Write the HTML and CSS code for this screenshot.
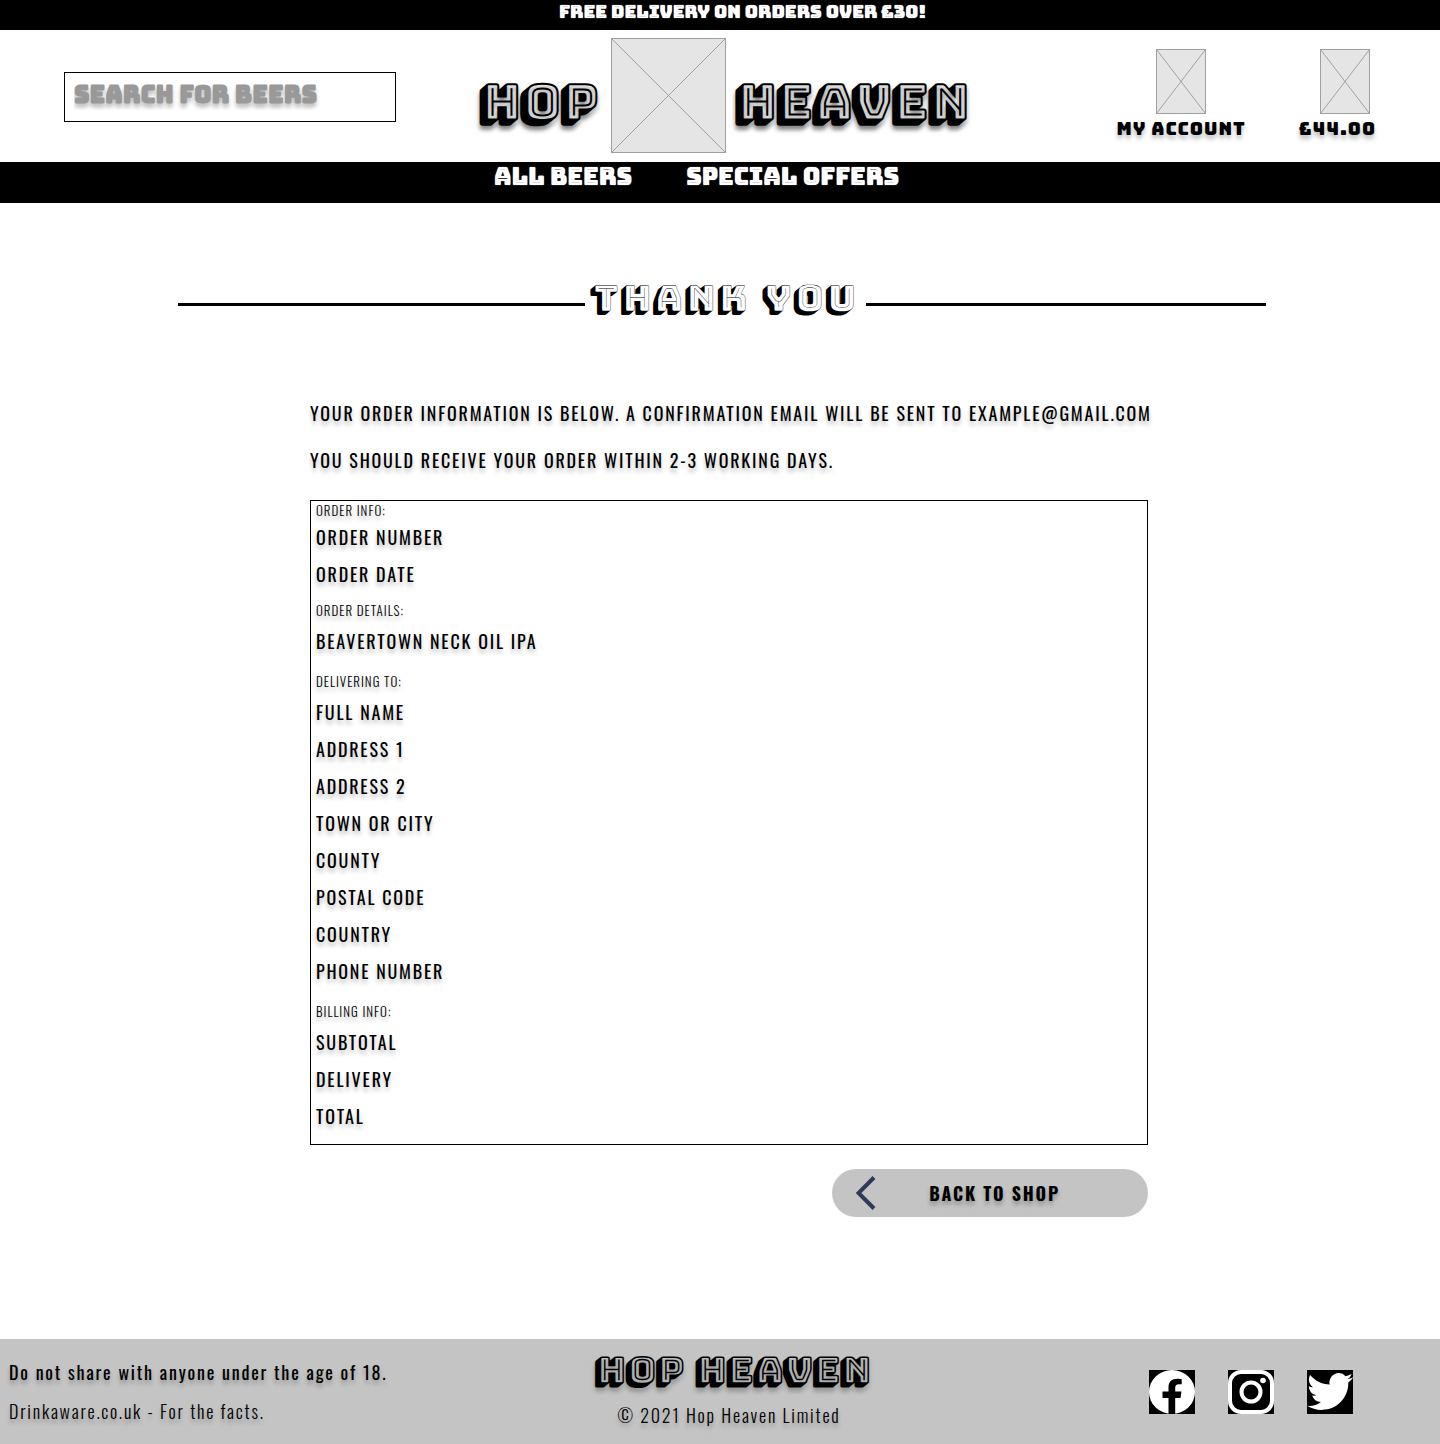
FILE: index.html
```html
<!DOCTYPE html>
<html lang="en">
<head>
<meta charset="utf-8">
<meta name="viewport" content="width=device-width, initial-scale=1">
<title>Hop Heaven - Thank you</title>
<link rel="stylesheet" href="styles.css">
</head>
<body>
<p class="promo">FREE DELIVERY ON ORDERS OVER £30!</p>
<header class="header">
  <form class="search" role="search">
    <input class="search-input" type="search" aria-label="Search for beers" placeholder="SEARCH FOR BEERS">
  </form>
  <a class="brand" href="#">
    <span class="brand-left shade">HOP</span>
    <svg class="brand-image" viewBox="0 0 115 115" aria-hidden="true"><rect x=".5" y=".5" width="114" height="114"/><path d="M.5.5l114 114M114.5.5L.5 114.5"/></svg>
    <span class="shade">HEAVEN</span>
  </a>
  <div class="actions">
    <a class="action account" href="#">
      <svg class="thumb" viewBox="0 0 50 65" aria-hidden="true"><rect x=".5" y=".5" width="49" height="64"/><path d="M.5.5l49 64M49.5.5L.5 64.5"/></svg>
      <span>MY ACCOUNT</span>
    </a>
    <a class="action basket" href="#">
      <svg class="thumb" viewBox="0 0 50 65" aria-hidden="true"><rect x=".5" y=".5" width="49" height="64"/><path d="M.5.5l49 64M49.5.5L.5 64.5"/></svg>
      <span>£44.00</span>
    </a>
  </div>
</header>
<nav class="nav">
  <a href="#">ALL BEERS</a>
  <a href="#">SPECIAL OFFERS</a>
</nav>
<main>
  <div class="title">
    <h1 class="title-text">THANK YOU</h1>
  </div>
  <div class="content">
    <p class="message">YOUR ORDER INFORMATION IS BELOW. A CONFIRMATION EMAIL WILL BE SENT TO EXAMPLE@GMAIL.COM</p>
    <p class="message">YOU SHOULD RECEIVE YOUR ORDER WITHIN 2-3 WORKING DAYS.</p>
    <div class="order">
      <section class="group">
        <h2>ORDER INFO:</h2>
        <ul><li>ORDER NUMBER</li><li>ORDER DATE</li></ul>
      </section>
      <section class="group details">
        <h2>ORDER DETAILS:</h2>
        <ul><li>BEAVERTOWN NECK OIL IPA</li></ul>
      </section>
      <section class="group">
        <h2>DELIVERING TO:</h2>
        <ul><li>FULL NAME</li><li>ADDRESS 1</li><li>ADDRESS 2</li><li>TOWN OR CITY</li><li>COUNTY</li><li>POSTAL CODE</li><li>COUNTRY</li><li>PHONE NUMBER</li></ul>
      </section>
      <section class="group">
        <h2>BILLING INFO:</h2>
        <ul><li>SUBTOTAL</li><li>DELIVERY</li><li>TOTAL</li></ul>
      </section>
    </div>
    <button class="back" type="button">
      <svg class="chevron" viewBox="0 0 20 34" aria-hidden="true"><path d="M18 1.500L2.500 17 18 32.500"/></svg>
      <span>BACK TO SHOP</span>
    </button>
  </div>
</main>
<footer class="footer">
  <div class="notice">
    <p class="strong">Do not share with anyone under the age of 18.</p>
    <p>Drinkaware.co.uk - For the facts.</p>
  </div>
  <div class="about">
    <span class="shade shade-small">HOP HEAVEN</span>
    <p>© 2021 Hop Heaven Limited</p>
  </div>
  <div class="social">
    <a href="#" aria-label="Facebook"><svg viewBox="0 0 46 44"><path fill="#000" d="M0 0h46v44H0z"/><ellipse cx="23" cy="22" rx="23" ry="22" fill="#fff"/><path d="M19.500 44V28H13.500v-6.500h6V17c0-5.500 3.500-8.300 8.600-8.300 2.200 0 4.600.4 4.600.4v5.200h-2.800c-2.900 0-3.700 1.700-3.700 3.500v3.700h6.300L31.500 28h-5.300v16z"/></svg></a>
    <a href="#" aria-label="Instagram"><svg viewBox="0 0 46 44"><path d="M0 0h46v44H0z"/><rect x="2" y="2" width="42" height="40" rx="11" fill="none" stroke="#fff" stroke-width="4"/><circle cx="23" cy="22" r="9.500" fill="none" stroke="#fff" stroke-width="4"/><circle cx="35" cy="10.500" r="2.800" fill="#fff"/></svg></a>
    <a href="#" aria-label="Twitter"><svg viewBox="0 0 46 44"><path d="M0 0h46v44H0z"/><path fill="#fff" transform="translate(0 -1) scale(1.917 1.880)" d="M23.950 4.570a10 10 0 0 1-2.820.770 4.960 4.960 0 0 0 2.160-2.720c-.950.550-2 .950-3.130 1.180a4.920 4.920 0 0 0-8.380 4.480C7.690 8.090 4.070 6.130 1.640 3.160a4.820 4.820 0 0 0-.670 2.480c0 1.710.870 3.210 2.190 4.100a4.900 4.900 0 0 1-2.230-.620v.060a4.920 4.920 0 0 0 3.950 4.830 5 5 0 0 1-2.210.080 4.940 4.940 0 0 0 4.600 3.420A9.870 9.870 0 0 1 0 19.540a13.990 13.990 0 0 0 7.550 2.210c9.050 0 14-7.500 14-13.980 0-.210 0-.420-.020-.630a9.940 9.940 0 0 0 2.460-2.550z"/></svg></a>
  </div>
</footer>
</body>
</html>
```
FILE: styles.css
```css
* {
  box-sizing: border-box;
}

body {
  margin: 0;
  min-height: 100vh;
  display: flex;
  flex-direction: column;
  background: #fff;
  color: #000;
  font-family: Oswald, "Open Sans", sans-serif;
  font-size: 18px;
  letter-spacing: .1em;
}

h1, h2, p, ul {
  margin: 0;
  padding: 0;
  font-weight: inherit;
}

ul {
  list-style: none;
}

a {
  color: inherit;
  text-decoration: none;
}

.promo, .nav, .search-input {
  font-family: "Bungee Inline", Inter, sans-serif;
  letter-spacing: 0;
}

.promo, .nav {
  background: #000;
  color: #fff;
  text-shadow: 0 0 1px #fff;
}

.promo {
  height: 30px;
  padding-left: 45px;
  font-size: 18px;
  line-height: 23px;
  text-align: center;
}

.header {
  height: 132px;
  padding: 0 64px;
  display: grid;
  grid-template-columns: 1fr auto 1fr;
  align-items: center;
}

.search {
  width: 332px;
  padding-top: 2px;
}

.search-input {
  display: block;
  width: 100%;
  height: 50px;
  padding: 0 9px 6px;
  border: 1px solid #000;
  border-radius: 0;
  background: #fff;
  font-size: 24px;
  font-weight: 700;
  appearance: none;
}

.search-input::placeholder {
  color: #999;
  opacity: 1;
  text-shadow: 0 4px 4px rgba(0, 0, 0, .25);
}

.brand {
  padding: 0 0 2px 6px;
  display: flex;
  align-items: center;
  gap: 8px;
}

.brand .shade {
  padding-top: 14px;
}

.brand-left {
  margin-right: 6px;
}

.brand-image {
  width: 115px;
  height: 115px;
}

.brand-image, .thumb {
  display: block;
  fill: #e5e5e5;
  stroke: #a0a0a0;
}

.shade {
  display: block;
  font-family: "Bungee Shade", Inter, sans-serif;
  font-size: 48px;
  font-weight: 700;
  line-height: 60px;
  letter-spacing: 0;
  text-shadow: 0 4px 4px rgba(0, 0, 0, .5);
}

.shade-small {
  margin-bottom: 14px;
  font-size: 36px;
  line-height: 36px;
  text-shadow: 0 4px 4px rgba(0, 0, 0, .25);
}

.actions {
  justify-self: end;
  padding-bottom: 4px;
  display: flex;
  gap: 53px;
}

.action {
  display: flex;
  flex-direction: column;
  align-items: center;
  gap: 4px;
  font-family: Bungee, Inter, sans-serif;
  font-size: 18px;
  line-height: 22px;
  letter-spacing: 1px;
  text-shadow: 0 4px 4px rgba(0, 0, 0, .25);
}

.thumb {
  width: 50px;
  height: 65px;
}

.basket {
  align-items: flex-end;
}

.basket .thumb {
  margin-right: 6px;
}

.nav {
  height: 41px;
  padding-right: 47px;
  display: flex;
  justify-content: center;
  gap: 54px;
  font-size: 24px;
  line-height: 30px;
}

.title {
  padding: 68px 174px 0 178px;
  display: flex;
  align-items: center;
  gap: 5px;
}

.title::before, .title::after {
  content: "";
  flex: 1 1 0;
  height: 3px;
  background: #000;
}

.title::before {
  flex-basis: 7px;
}

.title-text {
  padding: 0 4px 12px 0;
  font-family: "Bungee Shade", Inter, sans-serif;
  font-size: 36px;
  line-height: 54px;
}

.content {
  padding: 62px 292px 0 310px;
}

.message {
  margin-bottom: 19px;
  line-height: 28px;
  white-space: nowrap;
}

.message, .group, .back, .footer {
  text-shadow: 0 4px 4px rgba(0, 0, 0, .25);
}

.order {
  margin-top: 26px;
  padding: 0 5px 9px;
  border: 1px solid #000;
}

.group h2 {
  font-size: 13px;
  line-height: 18px;
  font-weight: 300;
  letter-spacing: 1px;
}

.group li {
  line-height: 37px;
}

.group + .group {
  margin-top: 12px;
}

.group + .details {
  margin-top: 8px;
}

.group + .group h2 {
  margin-bottom: 4px;
}

.back {
  width: 316px;
  height: 48px;
  margin: 24px 0 0 auto;
  padding: 0 88px 0 24px;
  display: flex;
  align-items: center;
  justify-content: space-between;
  border: 0;
  border-radius: 24px;
  background: #c4c4c4;
  color: #000;
  font: inherit;
  font-weight: 700;
  letter-spacing: inherit;
}

.chevron {
  width: 20px;
  height: 34px;
  fill: none;
  stroke: #2e3a59;
  stroke-width: 4px;
}

.footer {
  margin-top: auto;
  min-height: 105px;
  padding: 0 9px;
  display: grid;
  grid-template-columns: 1fr auto 1fr;
  align-items: center;
  background: #c4c4c4;
  font-weight: 300;
}

.notice {
  line-height: 39px;
}

.strong {
  font-weight: 400;
}

.about {
  padding: 0 0 4px 24px;
  text-align: center;
}

.about p {
  padding-right: 6px;
}

.social {
  justify-self: end;
  padding-right: 78px;
  display: flex;
  gap: 33px;
}

.social svg {
  display: block;
  width: 46px;
  height: 44px;
}
```
